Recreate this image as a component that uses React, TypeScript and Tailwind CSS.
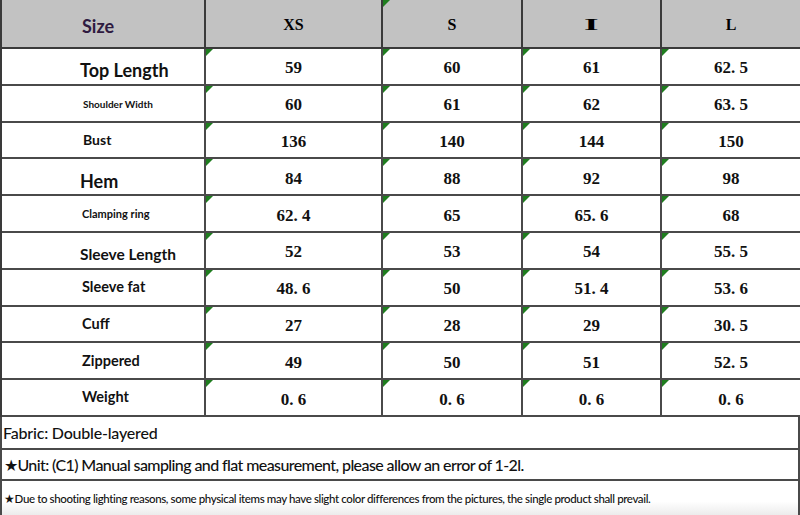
import React from "react";

type Row = {
  label: string;
  size: string;
  offset: string;
  values: string[];
};

const rows: Row[] = [
  { label: "Top Length", size: "text-[18px]", offset: "pt-[8px] pl-[78px]", values: ["59", "60", "61", "62. 5"] },
  { label: "Shoulder Width", size: "text-[10px]", offset: "pt-[2px] pl-[81px]", values: ["60", "61", "62", "63. 5"] },
  { label: "Bust", size: "text-[14px]", offset: "pt-0 pl-[81px]", values: ["136", "140", "144", "150"] },
  { label: "Hem", size: "text-[18px]", offset: "pt-[8px] pl-[78px]", values: ["84", "88", "92", "98"] },
  { label: "Clamping ring", size: "text-[11px]", offset: "pt-0 pl-[80px]", values: ["62. 4", "65", "65. 6", "68"] },
  { label: "Sleeve Length", size: "text-[15.5px]", offset: "pt-[8px] pl-[78px]", values: ["52", "53", "54", "55. 5"] },
  { label: "Sleeve fat", size: "text-[14.5px]", offset: "pt-0 pl-[80px]", values: ["48. 6", "50", "51. 4", "53. 6"] },
  { label: "Cuff", size: "text-[14.5px]", offset: "pt-0 pl-[80px]", values: ["27", "28", "29", "30. 5"] },
  { label: "Zippered", size: "text-[14.5px]", offset: "pt-0 pl-[80px]", values: ["49", "50", "51", "52. 5"] },
  { label: "Weight", size: "text-[14.5px]", offset: "pt-0 pl-[80px]", values: ["0. 6", "0. 6", "0. 6", "0. 6"] },
];

const Mark = () => (
  <svg width="7" height="7" className="absolute left-0 top-0">
    <polygon points="0,0 7,0 0,7" fill="#1f7d1f" />
  </svg>
);

const App = () => {
  return (
    <div className="w-[800px] h-[515px] bg-white overflow-hidden text-[#111]">
      <div className="grid grid-cols-[204px_177px_140px_139px_140px] grid-rows-[49px_repeat(10,minmax(0,1fr))] h-[417px] border-l-2 border-[#3a3a3a]">
        {/* header */}
        <div className="bg-[#c2c2c2] border-r-2 border-b-2 border-[#3a3a3a] flex items-center pl-[80px] pt-[6px]">
          <span className="font-['Lato',sans-serif] font-bold text-[18px] text-[#2e1a40]">Size</span>
        </div>
        {["XS", "S", "I", "L"].map((h, i) => (
          <div
            key={h}
            className="relative bg-[#c2c2c2] border-r-2 border-b-2 border-[#3a3a3a] flex items-center justify-center pt-[2px]"
          >
            {i === 1 && <Mark />}
            <span
              className={
                i === 2
                  ? "font-['Liberation_Serif',serif] font-black text-[17px] scale-x-[2.2] text-black"
                  : "font-['Liberation_Serif',serif] font-bold text-[16px] text-black"
              }
            >
              {h}
            </span>
          </div>
        ))}

        {rows.map((r) => (
          <React.Fragment key={r.label}>
            <div className={`border-r-2 border-b-2 border-[#4a4a4a] flex items-center ${r.offset}`}>
              <span className={`font-['Lato',sans-serif] font-bold ${r.size} leading-none`}>{r.label}</span>
            </div>
            {r.values.map((v, i) => (
              <div
                key={i}
                className="relative border-r-2 border-b-2 border-[#4a4a4a] flex items-center justify-center pt-[3px]"
              >
                <Mark />
                <span className="font-['Liberation_Serif',serif] font-bold text-[17px] leading-none whitespace-pre">
                  {v}
                </span>
              </div>
            ))}
          </React.Fragment>
        ))}
      </div>

      <div className="h-[33px] border-x-2 border-b-2 border-[#4a4a4a] flex items-center pl-[1px]">
        <span className="font-['Lato',sans-serif] text-[16px] tracking-[-0.2px] font-medium">Fabric: Double-layered</span>
      </div>
      <div className="h-[31px] border-x-2 border-b-2 border-[#4a4a4a] flex items-center pl-[2px]">
        <span className="font-['Lato',sans-serif] text-[16px] tracking-[-0.6px] font-medium">
          ★Unit: (C1) Manual sampling and flat measurement, please allow an error of 1-2l.
        </span>
      </div>
      <div className="h-[34px] border-x-2 border-[#4a4a4a] flex items-start pt-[9px] pl-[2px] bg-gradient-to-b from-white from-60% to-[#ececec]">
        <span className="font-['Lato',sans-serif] text-[11.5px] tracking-[-0.38px] font-medium">
          ★Due to shooting lighting reasons, some physical items may have slight color differences from the pictures, the single product shall prevail.
        </span>
      </div>
    </div>
  );
};

export default App;
